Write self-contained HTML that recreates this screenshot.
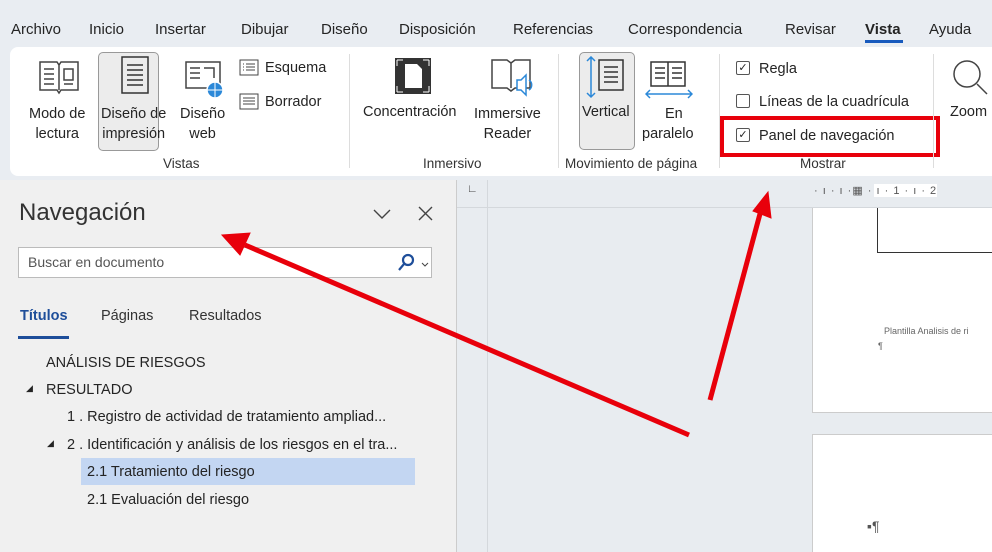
<!DOCTYPE html>
<html><head><meta charset="utf-8"><style>
*{margin:0;padding:0;box-sizing:border-box}
body{width:992px;height:552px;overflow:hidden;background:#e9edf2;font-family:"Liberation Sans",sans-serif;color:#242424;position:relative}
.a{position:absolute;white-space:nowrap}
.tab{font-size:15px;top:21px}
.rib{position:absolute;left:10px;top:47px;width:990px;height:129px;background:#fff;border-radius:8px}
.sm{font-size:14.5px}
.grp{font-size:13.5px;top:156px;color:#333}
.sep{position:absolute;top:54px;width:1px;height:114px;background:#ddd}
.cb{position:absolute;width:14px;height:14px;border:1px solid #555;border-radius:2px;background:#fff;font-size:11px;line-height:12px;text-align:center}
</style></head><body>
<div class="a tab" style="left:11px">Archivo</div>
<div class="a tab" style="left:89px">Inicio</div>
<div class="a tab" style="left:155px">Insertar</div>
<div class="a tab" style="left:241px">Dibujar</div>
<div class="a tab" style="left:321px">Diseño</div>
<div class="a tab" style="left:399px">Disposición</div>
<div class="a tab" style="left:513px">Referencias</div>
<div class="a tab" style="left:628px">Correspondencia</div>
<div class="a tab" style="left:785px">Revisar</div>
<div class="a tab" style="left:865px;font-weight:bold">Vista</div>
<div class="a" style="left:865px;top:40px;width:38px;height:3px;background:#185abd"></div>
<div class="a tab" style="left:929px">Ayuda</div>
<div class="rib"></div>
<svg class="a" style="left:38px;top:60px" width="42" height="36" viewBox="0 0 42 36" fill="none" stroke="#444" stroke-width="1.5"><path d="M2 2h17l2 3 2-3h17v28H23l-2 3-2-3H2z M21 5v25"/><path d="M6 9h10M6 14h10M6 19h10M6 24h10M26 9h9v11h-9zM26 24h9"/></svg>
<div class="a" style="left:98px;top:52px;width:61px;height:99px;background:#ececec;border:1px solid #999;border-radius:5px"></div>
<svg class="a" style="left:120px;top:56px" width="30" height="40" fill="none" stroke="#333" stroke-width="1.5"><rect x="2" y="1" width="26" height="36"/><path d="M7 9h16M7 14h16M7 19h16M7 24h16M7 29h16"/></svg>
<svg class="a" style="left:184px;top:60px" width="42" height="40" fill="none" stroke="#444" stroke-width="1.5"><path d="M2 2h34v26H2z M6 8h10M6 13h10M6 18h10M20 8h10v10"/><circle cx="31" cy="30" r="8" fill="#2b88d8" stroke="#fff"/><path d="M23 30h16M31 22v16" stroke="#fff" stroke-width="1"/></svg>
<div class="a sm" style="left:29px;top:104px;line-height:20px;text-align:center">Modo de<br>lectura</div>
<div class="a sm" style="left:101px;top:104px;line-height:20px;text-align:center">Diseño de<br>impresión</div>
<div class="a sm" style="left:180px;top:104px;line-height:20px;text-align:center">Diseño<br>web</div>
<svg class="a" style="left:239px;top:59px" width="20" height="17" fill="none" stroke="#444"><rect x="1" y="1" width="18" height="15"/><path d="M4 5h1M7 5h9M4 8h1M7 8h9M4 11h1M7 11h9"/></svg>
<div class="a sm" style="left:265px;top:60px">Esquema</div>
<svg class="a" style="left:239px;top:93px" width="20" height="17" fill="none" stroke="#444"><rect x="1" y="1" width="18" height="15"/><path d="M4 5h12M4 8h12M4 11h12"/></svg>
<div class="a sm" style="left:265px;top:94px">Borrador</div>
<div class="a grp" style="left:163px">Vistas</div>
<div class="sep" style="left:349px"></div>
<svg class="a" style="left:395px;top:58px" width="36" height="36"><rect x="0" y="0" width="36" height="36" fill="#333"/><path d="M10 6h12l5 5v19H10z" fill="#fff"/><path d="M2 2h6M2 2v6M34 2h-6M34 2v6M2 34h6M2 34v-6M34 34h-6M34 34v-6" stroke="#fff"/></svg>
<svg class="a" style="left:490px;top:58px" width="44" height="44" fill="none" stroke="#444" stroke-width="1.5"><path d="M2 2h15l4 3 4-3h15v28H25l-4 3-4-3H2z M21 5v25"/><path d="M27 22h4l5-5v20l-5-5h-4z" fill="#fff" stroke="#2b88d8"/><path d="M39 22a6 6 0 010 10" stroke="#2b88d8"/></svg>
<div class="a sm" style="left:363px;top:104px">Concentración</div>
<div class="a sm" style="left:474px;top:104px;line-height:20px;text-align:center">Immersive<br>Reader</div>
<div class="a grp" style="left:423px">Inmersivo</div>
<div class="sep" style="left:558px"></div>
<div class="a" style="left:579px;top:52px;width:56px;height:98px;background:#ececec;border:1px solid #999;border-radius:5px"></div>
<svg class="a" style="left:584px;top:56px" width="44" height="44" fill="none" stroke-width="1.5"><path d="M7 1v40M3 5l4-4 4 4M3 37l4 4 4-4" stroke="#2b88d8"/><rect x="15" y="4" width="24" height="30" stroke="#333"/><path d="M20 11h14M20 16h14M20 21h14M20 26h14" stroke="#333"/></svg>
<svg class="a" style="left:645px;top:60px" width="48" height="40" fill="none" stroke-width="1.5"><path d="M6 2h34v24H6zM23 2v24M10 8h10M10 13h10M10 18h10M27 8h10M27 13h10M27 18h10" stroke="#333"/><path d="M1 34h46M5 30l-4 4 4 4M43 30l4 4-4 4" stroke="#2b88d8"/></svg>
<div class="a sm" style="left:582px;top:104px">Vertical</div>
<div class="a sm" style="left:642px;top:104px;line-height:20px;text-align:center">&nbsp;&nbsp;&nbsp;En<br>paralelo</div>
<div class="a grp" style="left:565px">Movimiento de página</div>
<div class="sep" style="left:719px"></div>
<div class="cb" style="left:736px;top:61px">✓</div>
<div class="a sm" style="left:759px;top:61px">Regla</div>
<div class="cb" style="left:736px;top:94px"></div>
<div class="a sm" style="left:759px;top:94px">Líneas de la cuadrícula</div>
<div class="cb" style="left:736px;top:128px">✓</div>
<div class="a sm" style="left:759px;top:128px">Panel de navegación</div>
<div class="a" style="left:720px;top:116px;width:220px;height:41px;border:4px solid #e8000b"></div>
<div class="a grp" style="left:800px">Mostrar</div>
<div class="sep" style="left:933px"></div>
<svg class="a" style="left:950px;top:58px" width="42" height="40" fill="none" stroke="#444" stroke-width="1.5"><circle cx="17" cy="16" r="13"/><path d="M27 26l10 10"/></svg>
<div class="a sm" style="left:950px;top:104px">Zoom</div>
<div class="a" style="left:0;top:180px;width:456px;height:372px;background:#f0f0f0"></div>
<div class="a" style="left:456px;top:180px;width:1px;height:372px;background:#ccc"></div>
<div class="a" style="left:19px;top:199px;font-size:24px;color:#333">Navegación</div>
<svg class="a" style="left:373px;top:206px" width="62" height="16" fill="none" stroke="#444" stroke-width="1.4"><path d="M1 4l8 8 8-8M46 1l13 13M59 1L46 14"/></svg>
<div class="a" style="left:18px;top:247px;width:414px;height:31px;background:#fff;border:1px solid #bbb"></div>
<div class="a" style="left:28px;top:254px;font-size:14px;color:#555">Buscar en documento</div>
<svg class="a" style="left:397px;top:253px" width="34" height="20" fill="none" stroke="#1e4e9a" stroke-width="2.2"><circle cx="11" cy="7" r="5"/><path d="M7 11l-5 6"/><path d="M25 10l3 3 3-3" stroke="#444" stroke-width="1"/></svg>
<div class="a" style="left:20px;top:308px;font-size:14.5px;color:#1e4e9a;font-weight:bold">Títulos</div>
<div class="a" style="left:18px;top:336px;width:51px;height:3px;background:#1e4e9a"></div>
<div class="a" style="left:101px;top:308px;font-size:14.5px;color:#333">Páginas</div>
<div class="a" style="left:189px;top:308px;font-size:14.5px;color:#333">Resultados</div>
<div class="a" style="left:81px;top:458px;width:334px;height:27px;background:#c3d6f2"></div>
<div class="a sm" style="left:46px;top:355px">ANÁLISIS DE RIESGOS</div>
<div class="a" style="left:26px;top:383px;font-size:9px">◢</div>
<div class="a sm" style="left:46px;top:382px">RESULTADO</div>
<div class="a sm" style="left:67px;top:409px">1 . Registro de actividad de tratamiento ampliad...</div>
<div class="a" style="left:47px;top:438px;font-size:9px">◢</div>
<div class="a sm" style="left:67px;top:437px">2 . Identificación y análisis de los riesgos en el tra...</div>
<div class="a sm" style="left:87px;top:464px">2.1 Tratamiento del riesgo</div>
<div class="a sm" style="left:87px;top:492px">2.1 Evaluación del riesgo</div>
<div class="a" style="left:457px;top:180px;width:535px;height:372px;background:#e8ecf0"></div>
<div class="a" style="left:457px;top:207px;width:535px;height:1px;background:#d4d8dc"></div>
<div class="a" style="left:487px;top:180px;width:1px;height:372px;background:#d4d8dc"></div>
<div class="a" style="left:467px;top:183px;font-size:11px;font-weight:bold;color:#444">∟</div>
<div class="a" style="left:814px;top:184px;font-size:11px;color:#555;letter-spacing:1px;background:linear-gradient(90deg,transparent 60px,#fff 60px)">· ı · ı ·▦ · ı · 1 · ı · 2</div>
<div class="a" style="left:812px;top:208px;width:180px;height:205px;background:#fff;border-left:1px solid #ccc;border-bottom:1px solid #ccc"></div>
<div class="a" style="left:877px;top:208px;width:115px;height:45px;border-left:1.5px solid #333;border-bottom:1.5px solid #333"></div>
<div class="a" style="left:884px;top:326px;font-size:9px;color:#666">Plantilla Analisis de ri</div>
<div class="a" style="left:878px;top:341px;font-size:9px;color:#666">¶</div>
<div class="a" style="left:812px;top:434px;width:180px;height:118px;background:#fff;border-left:1px solid #ccc;border-top:1px solid #ccc"></div>
<div class="a" style="left:867px;top:518px;font-size:14px;color:#555">▪¶</div>
<svg class="a" style="left:0;top:0" width="992" height="552"><g stroke="#e8000b" stroke-width="5" fill="#e8000b"><line x1="689" y1="435" x2="245" y2="245"/><polygon points="222,235 250,233 240,255" stroke-width="1"/><line x1="710" y1="400" x2="761" y2="210"/><polygon points="768,192 753,211 771,218" stroke-width="1"/></g></svg>
</body></html>
